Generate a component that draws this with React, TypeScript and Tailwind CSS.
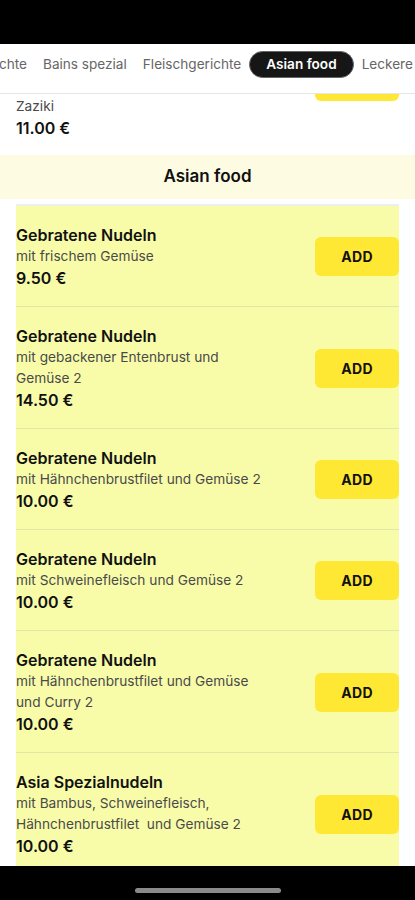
import React from 'react';

interface Dish {
    name: string;
    lines: string[];
    price: string;
}

const dishes: Dish[] = [
    { name: 'Gebratene Nudeln', lines: ['mit frischem Gemüse'], price: '9.50 €' },
    { name: 'Gebratene Nudeln', lines: ['mit gebackener Entenbrust und', 'Gemüse 2'], price: '14.50 €' },
    { name: 'Gebratene Nudeln', lines: ['mit Hähnchenbrustfilet und Gemüse 2'], price: '10.00 €' },
    { name: 'Gebratene Nudeln', lines: ['mit Schweinefleisch und Gemüse 2'], price: '10.00 €' },
    { name: 'Gebratene Nudeln', lines: ['mit Hähnchenbrustfilet und Gemüse', 'und Curry 2'], price: '10.00 €' },
    { name: 'Asia Spezialnudeln', lines: ['mit Bambus, Schweinefleisch,', 'Hähnchenbrustfilet  und Gemüse 2'], price: '10.00 €' },
];

const tabs = ['Bains spezial', 'Fleischgerichte', 'Asian food', 'Leckere'];

function AddButton() {
    return (
        <button className="w-[84px] h-[39px] rounded-[6px] bg-[#ffe833] text-[14px] font-bold text-[#111] tracking-wide shrink-0">
            ADD
        </button>
    );
}

function DishRow({ dish }: { dish: Dish }) {
    return (
        <div className="flex items-center justify-between pt-[18px] pb-[17px] border-b border-[#e2e6a6]">
            <div className="flex flex-col">
                <span className="text-[16px] leading-[22px] font-semibold text-[#111]">{dish.name}</span>
                {dish.lines.map((line, i) => (
                    <span key={i} className="text-[13.7px] leading-[21px] text-[#4a4a4a] whitespace-pre">
                        {line}
                    </span>
                ))}
                <span className="text-[16px] leading-[22px] font-semibold text-[#111]">{dish.price}</span>
            </div>
            <AddButton />
        </div>
    );
}

export default function App() {
    return (
        <div
            className="w-[415px] h-[900px] bg-white flex flex-col overflow-hidden"
            style={{ fontFamily: 'Inter, "Noto Sans", sans-serif' }}
        >
            {/* Status bar */}
            <div className="h-[44px] bg-black shrink-0" />

            {/* Category tabs */}
            <div className="h-[50px] shrink-0 border-b border-[#e6e6e6] flex items-start pt-[7px] overflow-hidden whitespace-nowrap">
                <div className="w-[35px] shrink-0 overflow-hidden flex justify-end">
                    <span className="px-2 h-[27px] flex items-center text-[13.6px] text-[#666]">Reisgerichte</span>
                </div>
                {tabs.map((tab) =>
                    tab === 'Asian food' ? (
                        <span
                            key={tab}
                            className="px-4 h-[27px] shrink-0 flex items-center rounded-full bg-[#161616] border border-[#666] text-[13.6px] font-semibold text-white"
                        >
                            {tab}
                        </span>
                    ) : (
                        <span key={tab} className="px-2 h-[27px] shrink-0 flex items-center text-[13.6px] text-[#666]">
                            {tab}
                        </span>
                    )
                )}
            </div>

            {/* Menu list */}
            <div className="flex-1 overflow-hidden">
                {/* previous item, scrolled off */}
                <div className="flex justify-between px-4 pb-[16px]">
                    <div className="flex flex-col pt-[2px]">
                        <span className="text-[13.7px] leading-[21px] text-[#4a4a4a]">Zaziki</span>
                        <span className="text-[16px] leading-[22px] font-semibold text-[#111]">11.00 €</span>
                    </div>
                    <div className="w-[84px] h-[7px] rounded-b-[6px] bg-[#ffe833]" />
                </div>

                {/* Section header */}
                <div className="h-[44px] bg-[#fefbe3] flex items-center justify-center">
                    <span className="text-[17px] font-semibold text-[#111]">Asian food</span>
                </div>

                <div className="mx-4 mt-[5px] border-t-2 border-[#eeeeee] bg-[#f8fca9]">
                    {dishes.map((dish, i) => (
                        <DishRow key={i} dish={dish} />
                    ))}
                </div>
            </div>

            {/* Home indicator */}
            <div className="h-[34px] bg-black shrink-0 flex items-end justify-center pb-[7px]">
                <div className="w-[146px] h-[5px] rounded-full bg-[#8a8a8a]" />
            </div>
        </div>
    );
}
